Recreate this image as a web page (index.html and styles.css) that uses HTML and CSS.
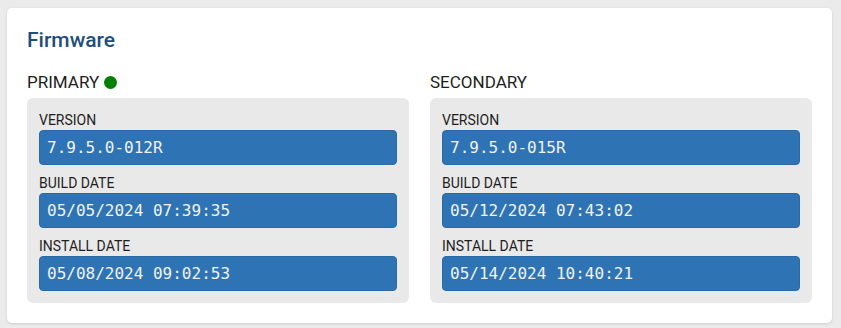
FILE: index.html
```html
<!DOCTYPE html>
<html lang="en">
<head>
    <meta charset="UTF-8">
    <meta name="viewport" content="width=device-width, initial-scale=1.0">
    <title>Firmware</title>
    <link rel="stylesheet" href="styles.css">
</head>
<body>
    <div class="card">
        <h2 class="card-title">Firmware</h2>

        <div class="columns">
            <!-- Primary image -->
            <div class="column">
                <div class="column-title">PRIMARY <span class="status-dot"></span></div>
                <div class="panel">
                    <div class="field-label">VERSION</div>
                    <div class="field-value">7.9.5.0-012R</div>
                    <div class="field-label">BUILD DATE</div>
                    <div class="field-value">05/05/2024 07:39:35</div>
                    <div class="field-label">INSTALL DATE</div>
                    <div class="field-value">05/08/2024 09:02:53</div>
                </div>
            </div>

            <!-- Secondary image -->
            <div class="column">
                <div class="column-title">SECONDARY</div>
                <div class="panel">
                    <div class="field-label">VERSION</div>
                    <div class="field-value">7.9.5.0-015R</div>
                    <div class="field-label">BUILD DATE</div>
                    <div class="field-value">05/12/2024 07:43:02</div>
                    <div class="field-label">INSTALL DATE</div>
                    <div class="field-value">05/14/2024 10:40:21</div>
                </div>
            </div>
        </div>
    </div>
</body>
</html>
```

FILE: styles.css
```css
body {
    margin: 0;
    padding: 8px 9px 6px 7px;
    background-color: #ebebeb;
    font-family: Roboto, "Liberation Sans", sans-serif;
    color: #1e1e1e;
}
.card {
    background-color: white;
    border-radius: 5px;
    box-shadow: 0 1px 3px rgba(0,0,0,0.12);
    padding: 20px;
}
.card-title {
    margin: 0;
    font-size: 21px;
    font-weight: 500;
    line-height: 24px;
    color: #1f4e7d;
}
.columns {
    display: grid;
    grid-template-columns: 1fr 1fr;
    gap: 21px;
    margin-top: 20px;
}
.column-title {
    display: flex;
    align-items: center;
    gap: 5px;
    font-size: 17px;
    line-height: 20px;
    height: 20px;
    margin-bottom: 6px;
}
.status-dot {
    display: inline-block;
    width: 13px;
    height: 13px;
    border-radius: 50%;
    background-color: #008000;
}
.panel {
    background-color: #e9e9e9;
    border-radius: 6px;
    padding: 12px;
}
.field-label {
    font-size: 14px;
    line-height: 20px;
    margin-top: 8px;
}
.field-label:first-child {
    margin-top: 0;
}
.field-value {
    height: 35px;
    box-sizing: border-box;
    display: flex;
    align-items: center;
    padding: 0 7px;
    background-color: #2e74b5;
    border: 1px solid #2a6aa6;
    border-radius: 4px;
    color: #f2f2f2;
    font-family: "DejaVu Sans Mono", "Liberation Mono", monospace;
    font-size: 16px;
}
```
